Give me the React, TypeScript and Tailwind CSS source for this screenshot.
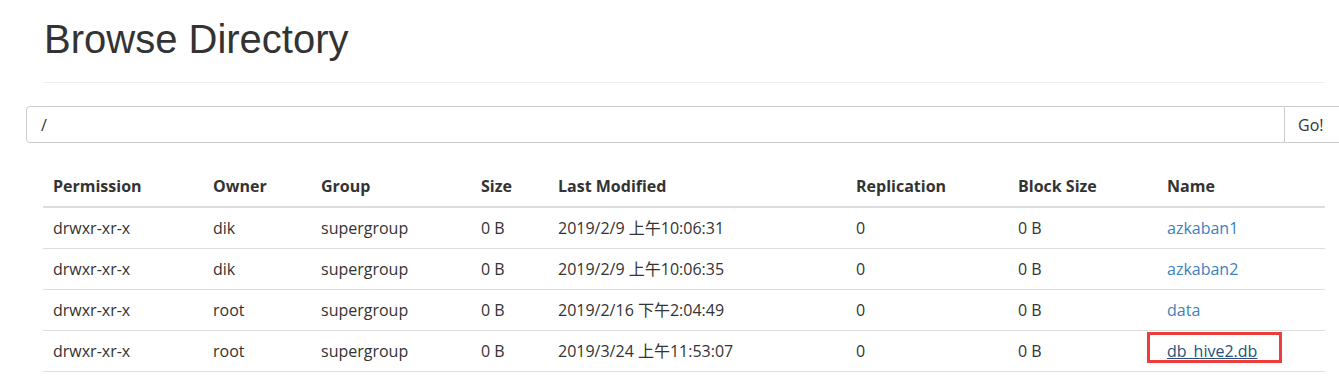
import React from "react";

const rows = [
  { perm: "drwxr-xr-x", owner: "dik", group: "supergroup", size: "0 B", mod: "2019/2/9 上午10:06:31", rep: "0", block: "0 B", name: "azkaban1" },
  { perm: "drwxr-xr-x", owner: "dik", group: "supergroup", size: "0 B", mod: "2019/2/9 上午10:06:35", rep: "0", block: "0 B", name: "azkaban2" },
  { perm: "drwxr-xr-x", owner: "root", group: "supergroup", size: "0 B", mod: "2019/2/16 下午2:04:49", rep: "0", block: "0 B", name: "data" },
  { perm: "drwxr-xr-x", owner: "root", group: "supergroup", size: "0 B", mod: "2019/3/24 上午11:53:07", rep: "0", block: "0 B", name: "db_hive2.db" },
];

const headers = ["Permission", "Owner", "Group", "Size", "Last Modified", "Replication", "Block Size", "Name"];
const widths = [160, 108, 160, 77, 298, 162, 149, 168];

export default function App() {
  return (
    <div
      className="w-[1339px] h-[378px] overflow-hidden bg-white text-[#333]"
      style={{ fontFamily: '"Open Sans", "Noto Sans CJK SC", sans-serif' }}
    >
      <div className="pl-[43px] pr-[14px]">
        <h1
          className="pt-[17px] pl-px text-[40px] leading-[44px] font-normal text-[#333]"
          style={{ fontFamily: '"Liberation Sans", Arial, sans-serif' }}
        >
          Browse Directory
        </h1>
        <div className="mt-[21px] h-px bg-[#eee]" />
      </div>

      <div className="ml-[26px] mt-[23px] flex h-[37px] w-[1330px]">
        <div className="flex-1 flex items-center rounded-l-[4px] border border-[#ccc] pl-[14px] text-[16px]">
          /
        </div>
        <div className="w-[71px] flex items-center border border-l-0 border-[#ccc] pl-[13px] text-[16px]">
          Go!
        </div>
      </div>

      <table className="ml-[43px] mt-[23px] table-fixed border-collapse text-[16px]" style={{ width: 1282 }}>
        <colgroup>
          {widths.map((w, i) => (
            <col key={i} style={{ width: w }} />
          ))}
        </colgroup>
        <thead>
          <tr className="h-[41px] border-b-2 border-[#ddd]">
            {headers.map((h) => (
              <th key={h} className="pl-[10px] text-left font-bold align-middle">
                {h}
              </th>
            ))}
          </tr>
        </thead>
        <tbody>
          {rows.map((r, i) => (
            <tr key={r.name} className="h-[41px] border-b border-[#ddd]">
              <td className="pl-[10px]">{r.perm}</td>
              <td className="pl-[10px]">{r.owner}</td>
              <td className="pl-[10px]">{r.group}</td>
              <td className="pl-[10px]">{r.size}</td>
              <td className="pl-[10px] whitespace-nowrap">{r.mod}</td>
              <td className="pl-[10px]">{r.rep}</td>
              <td className="pl-[10px]">{r.block}</td>
              <td className="pl-[10px]">
                {i === 3 ? (
                  <span className="relative inline-block">
                    <a className="text-[#23527c] underline">{r.name}</a>
                    <span className="absolute left-[-20px] top-[-7px] h-[31px] w-[135px] border-[3px] border-[#ee3b3b]" />
                  </span>
                ) : (
                  <a className="text-[#3d7fc1]">{r.name}</a>
                )}
              </td>
            </tr>
          ))}
        </tbody>
      </table>
    </div>
  );
}
